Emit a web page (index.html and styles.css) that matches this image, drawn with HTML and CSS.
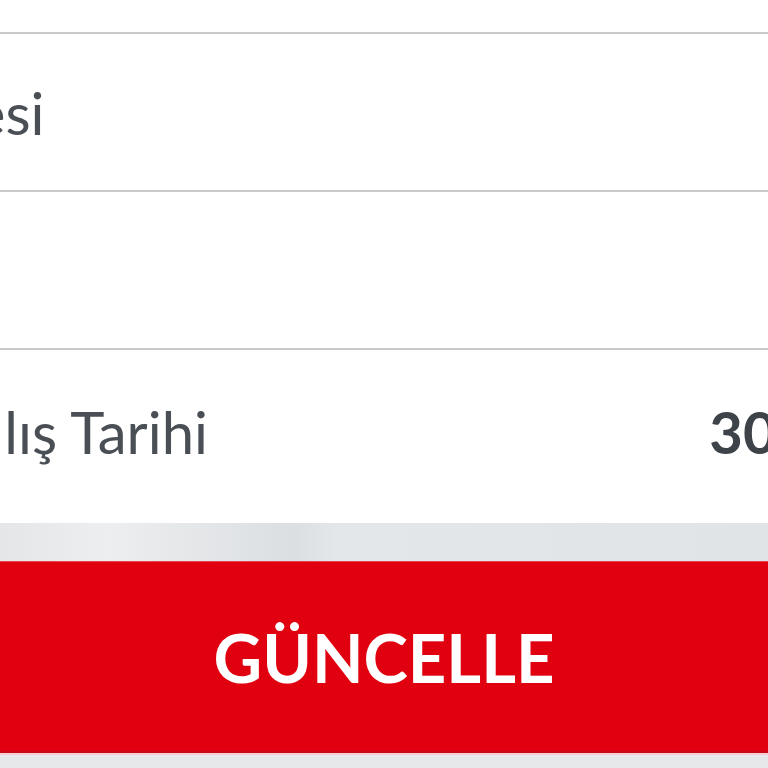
FILE: index.html
```html
<!DOCTYPE html>
<html lang="tr">

<head>
    <meta charset="UTF-8">
    <meta name="viewport" content="width=device-width, initial-scale=1.0">
    <title>Hat Bilgileri</title>
    <link rel="stylesheet" href="styles.css">
</head>

<body>
    <div class="top-space"></div>

    <section class="info-list">
        <div class="info-row">
            <span class="info-label">Ceza Süresi</span>
            <span class="info-value light">Kurumsal</span>
        </div>
        <div class="info-row">
            <span class="info-label">Paket</span>
            <span class="info-value">Aktif</span>
        </div>
        <div class="info-row last">
            <span class="info-label">Hattın Açılış Tarihi</span>
            <span class="info-value">30.06.2014</span>
        </div>
    </section>

    <div class="gray-band"></div>

    <button class="update-btn" type="button">GÜNCELLE</button>

    <div class="bottom-band"></div>
</body>

</html>
```

FILE: styles.css
```css
    * {
        box-sizing: border-box;
    }

    body {
        margin: 0;
        overflow: hidden;
        background: #ffffff;
        font-family: Lato, "Open Sans", sans-serif;
    }

    .top-space {
        height: 32px;
        background: #ffffff;
    }

    /* list is wider than the screen, the crop cuts both ends */
    .info-list {
        margin-left: -247px;
        margin-right: -238px;
    }

    .info-row {
        display: flex;
        justify-content: space-between;
        align-items: center;
        height: 158px;
        border-top: 2px solid #c9c9c9;
        color: #4a4f55;
    }

    .info-row.last {
        height: 175px;
        padding-bottom: 10px;
    }

    .info-label {
        font-size: 58px;
        font-weight: 400;
        white-space: nowrap;
    }

    .info-value {
        font-size: 58px;
        font-weight: 700;
        color: #3e4349;
        white-space: nowrap;
    }

    .info-value.light {
        font-weight: 400;
        color: #5a5f65;
    }

    .gray-band {
        height: 38px;
        background: linear-gradient(90deg, #e4e6e8 0%, #eceeef 14%, #dcdfe2 38%, #e4e7e9 44%, #e1e4e6 100%);
    }

    .update-btn {
        display: block;
        width: 100%;
        height: 192px;
        margin: 0;
        padding: 0;
        border: none;
        border-top: 1px solid #e8414a;
        border-bottom: 2px solid #c70a15;
        background: #e0000f;
        color: #ffffff;
        font-family: Lato, "Open Sans", sans-serif;
        font-size: 67px;
        font-weight: 700;
        text-align: center;
    }

    .bottom-band {
        height: 20px;
        border-top: 2px solid #f3d0d2;
        background: #e6e8ea;
    }
```
